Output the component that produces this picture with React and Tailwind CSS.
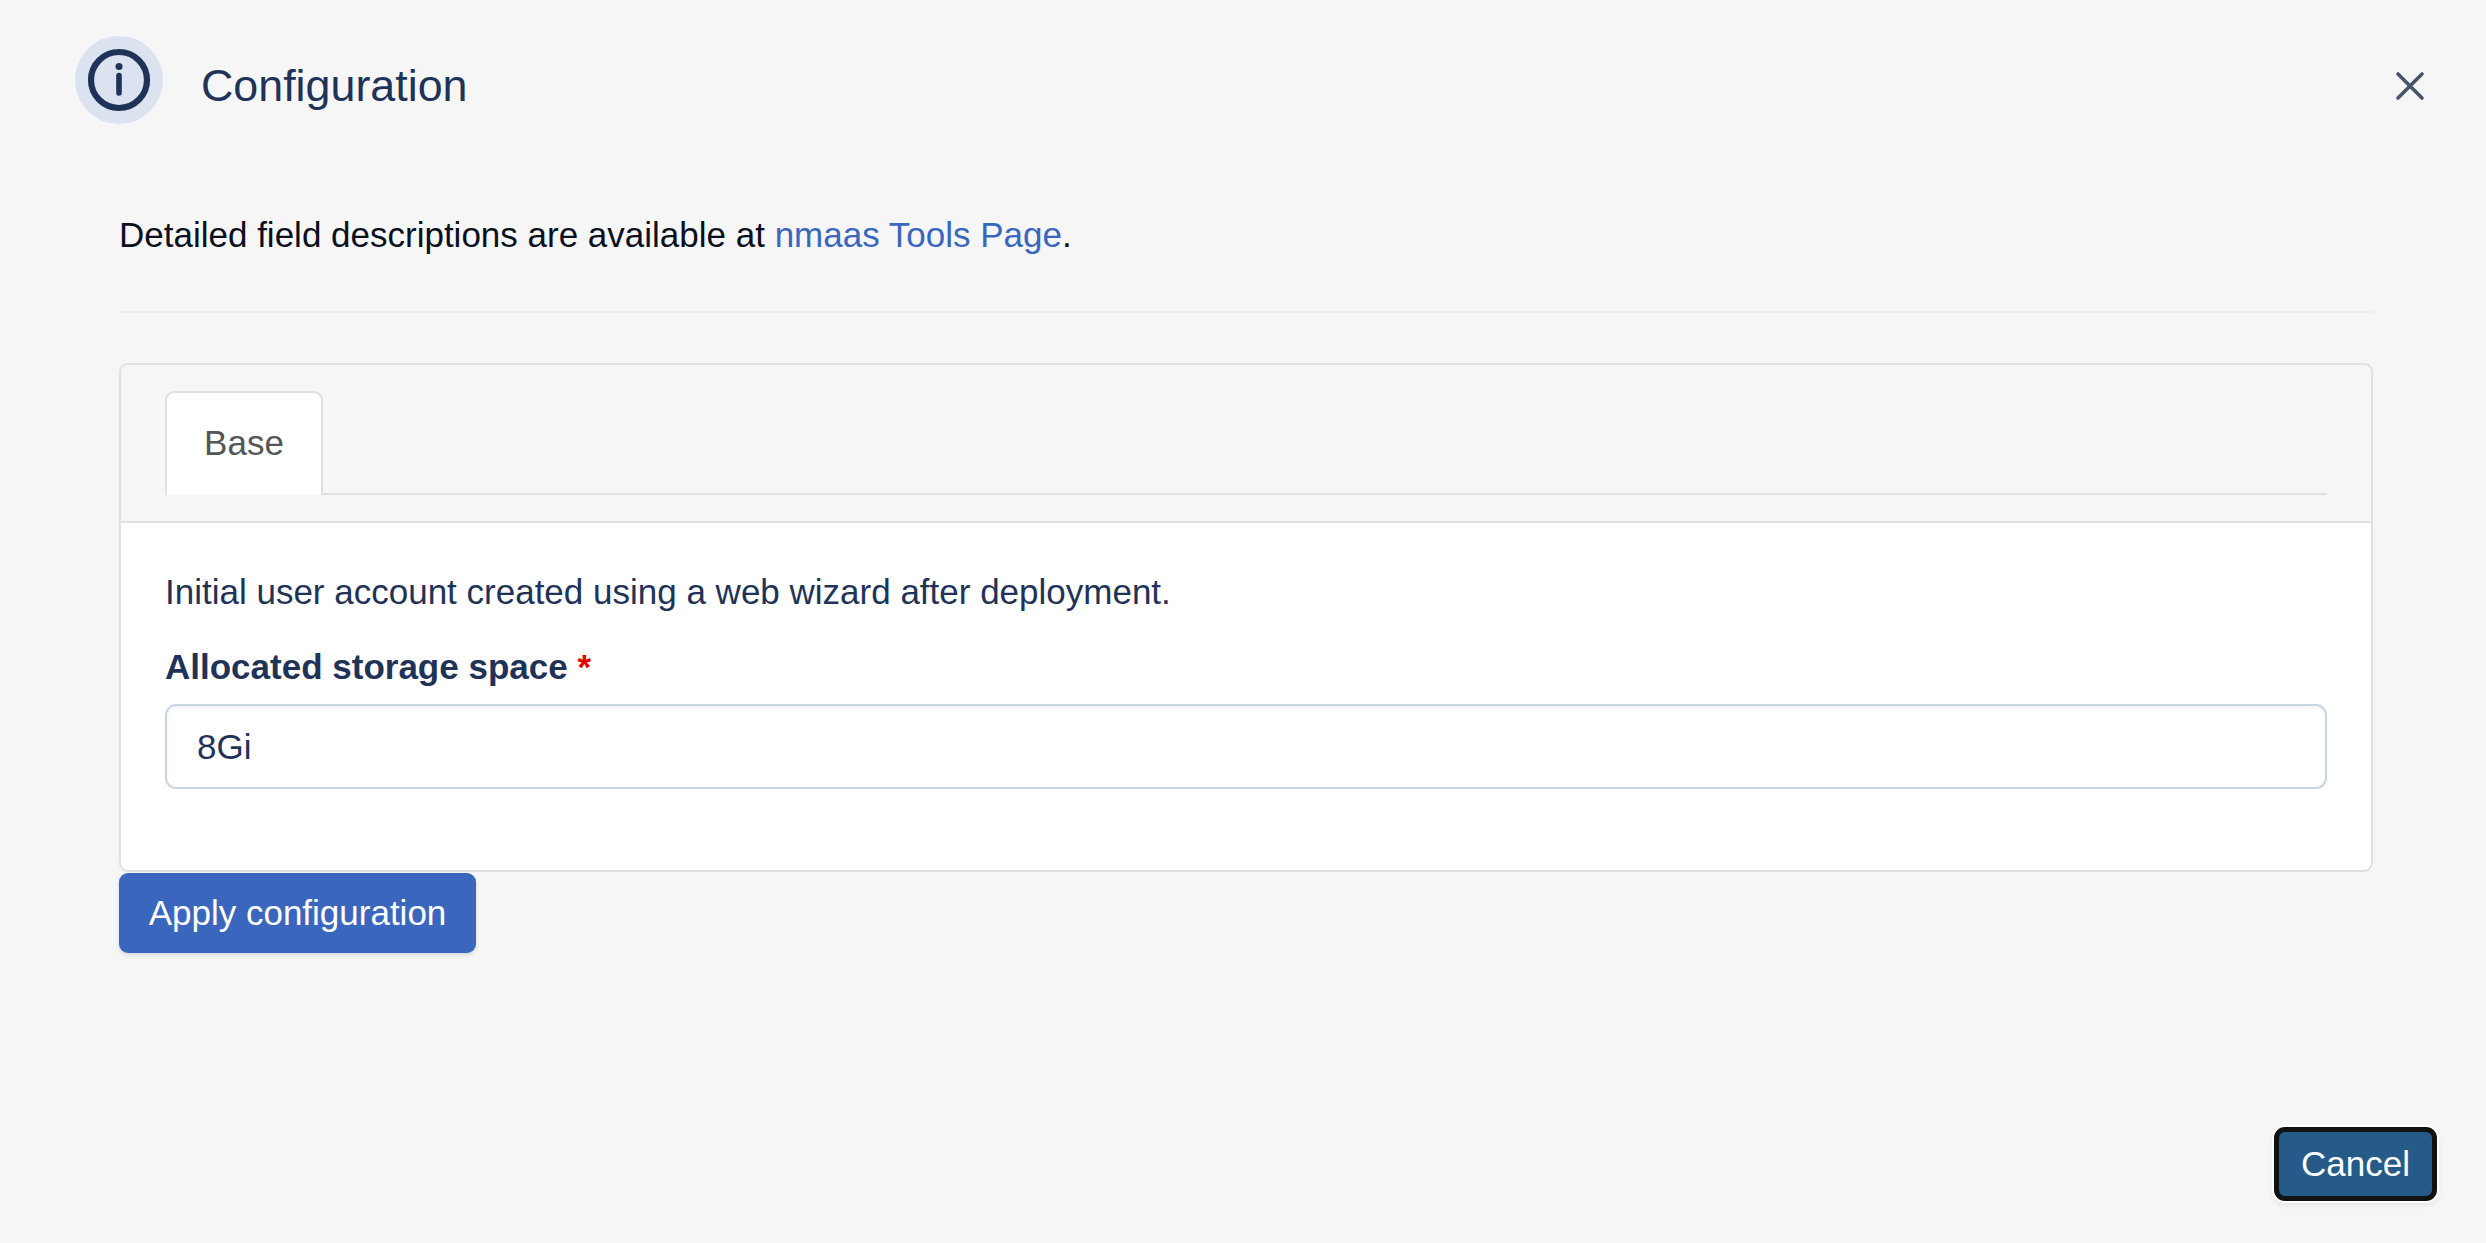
export default function App() {
  return (
    <div className="w-[2486px] h-[1243px] bg-[#f6f6f6] flex flex-col font-['Liberation_Sans',sans-serif] text-[35px] leading-[52.5px] overflow-hidden">
      {/* modal header */}
      <div className="flex items-center pl-[75px] pr-[61px] pt-[36px]">
        <div className="w-[88px] h-[88px] rounded-full bg-[#dbe3f0] flex items-center justify-center shrink-0">
          <svg width="88" height="88" viewBox="0 0 88 88" fill="none" stroke="#1f3358" strokeLinecap="round">
            <circle cx="44" cy="44" r="28" strokeWidth="6.2" />
            <line x1="44" y1="39.5" x2="44" y2="57" strokeWidth="5.6" />
            <circle cx="44" cy="30.5" r="3.5" fill="#1f3358" stroke="none" />
          </svg>
        </div>
        <h2 className="ml-[38px] mt-[10px] text-[44.8px] leading-[66px] text-[#1f3358]">Configuration</h2>
        <button className="ml-auto mt-[12px]">
          <svg width="30" height="30" viewBox="0 0 30 30" fill="none" stroke="#475569" strokeWidth="3.6" strokeLinecap="round" className="block">
            <path d="M3 3l24 24M27 3L3 27" />
          </svg>
        </button>
      </div>

      <div className="pl-[119px] pr-[113px]">
        <p className="mt-[85px] text-[#0b1020]">
          Detailed field descriptions are available at <a className="text-[#3a67bd]">nmaas Tools Page</a>.
        </p>
        <div className="mt-[49.5px] h-[2px] bg-[#eeeeee]" />

        {/* card with tabs */}
        <div className="mt-[50px] border-2 border-[#e0e0e0] rounded-[9px] overflow-hidden h-[509px] bg-white">
          <div className="bg-[#f6f6f6] border-b-2 border-[#e0e0e0] px-[44px] pt-[26px] pb-[26px]">
            <div className="flex border-b-2 border-[#e0e0e0] h-[104px]">
              <div className="w-[158px] h-[104px] pb-[1px] bg-white border-2 border-b-0 border-[#e0e0e0] rounded-t-[9px] flex items-center justify-center text-[#555555]">
                Base
              </div>
            </div>
          </div>
          <div className="px-[44px] pt-[43px]">
            <p className="text-[#1f3358]">Initial user account created using a web wizard after deployment.</p>
            <label className="block mt-[22px] mb-[11px] font-bold text-[#1f3358]">
              Allocated storage space <span className="text-[#e60000]">*</span>
            </label>
            <input
              defaultValue="8Gi"
              className="block w-full h-[85px] px-[30px] bg-white border-2 border-[#c9d5e3] rounded-[11px] text-[#1f3358] shadow-[inset_0_2px_3px_rgba(0,0,0,0.05)] outline-none"
            />
          </div>
        </div>

        <button className="mt-[1px] w-[357px] h-[80px] rounded-[9px] bg-[#3a67bd] text-white shadow-[0_2px_4px_rgba(0,0,0,0.12)]">
          Apply configuration
        </button>
      </div>

      {/* footer */}
      <div className="mt-auto flex justify-end pr-[49px] pb-[42px]">
        <button className="w-[163px] h-[74px] rounded-[11px] bg-[#265a88] border-[5px] border-[#111111] text-white ring-[2px] ring-white shadow-[0_3px_6px_rgba(0,0,0,0.1)]">
          Cancel
        </button>
      </div>
    </div>
  );
}
